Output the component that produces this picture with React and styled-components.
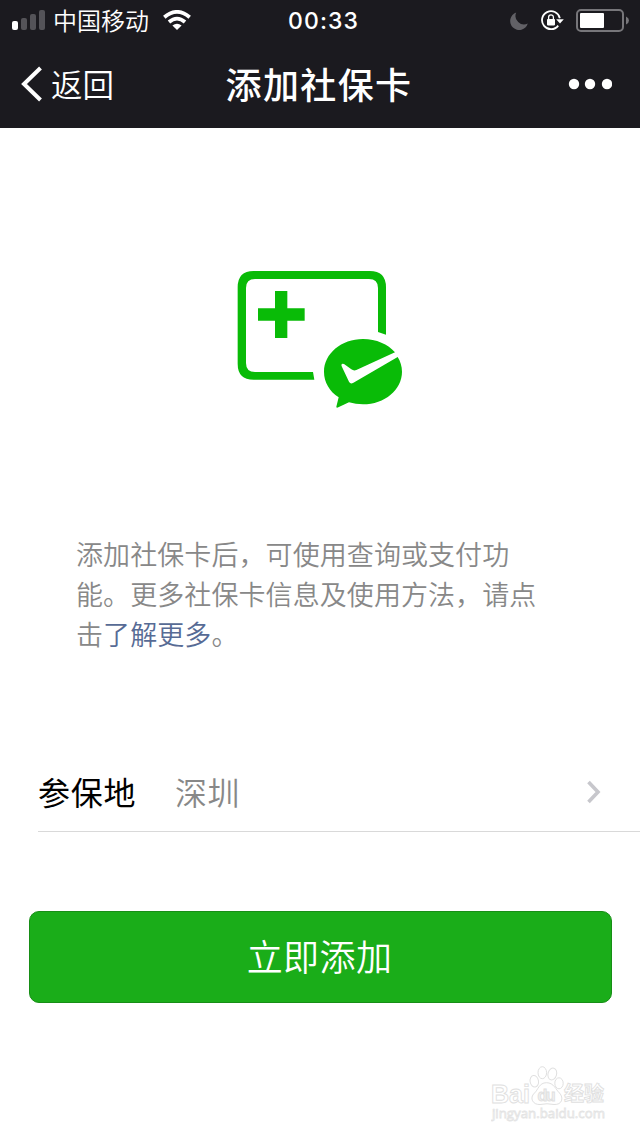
import React from 'react';
import styled, { createGlobalStyle } from 'styled-components';

const GlobalStyle = createGlobalStyle`
  * {
    box-sizing: border-box;
  }
  body {
    margin: 0;
    background: #fff;
    font-family: "Noto Sans CJK SC", sans-serif;
  }
  svg {
    display: block;
    flex: none;
  }
`;

const bars = [9, 12, 16, 20];

function StatusIcons() {
  return (
    <StatusRight>
      <svg width="18" height="18" viewBox="0 0 18 18">
        <path d="M6.2 .5 A9 9 0 1 0 17.8 11.6 A8.6 8.6 0 0 1 6.2 .5Z" fill="#626166" />
      </svg>
      <svg width="23" height="21" viewBox="0 0 23 21">
        <path d="M18.8 8.2 A9 9 0 1 0 17.2 15.6" fill="none" stroke="#fff" strokeWidth="1.8" />
        <path d="M15.2 9.2H22.8L19 13.4Z" fill="#fff" />
        <rect x="6" y="9" width="8" height="6.4" rx="0.8" fill="#fff" />
        <path d="M7.6 9.5V7.2a2.4 2.4 0 0 1 4.8 0V9.5" fill="none" stroke="#fff" strokeWidth="1.3" />
      </svg>
      <svg width="54" height="24" viewBox="0 0 54 24">
        <rect x="1" y="1" width="46" height="21" rx="4" fill="none" stroke="#77767a" strokeWidth="2" />
        <rect x="4" y="4" width="24" height="15" rx="1" fill="#fff" />
        <path d="M50 7.5 Q53 9 53 11.5 Q53 14 50 15.5Z" fill="#77767a" />
      </svg>
    </StatusRight>
  );
}

function CardIcon() {
  return (
    <svg width="190" height="160" viewBox="0 0 570 480" fill="#09bb07">
      <path d="M268 359H86Q38 359 38 311V82Q38 33 86 33H434Q483 33 483 82V224L459 216V84Q459 57 432 57H90Q63 57 63 84V309Q63 336 90 336H264Z" />
      <path d="M150 93H187V145H239V182H187V234H150V182H99V145H150Z" />
      <path d="M414 237C349 237 297 281 297 335C297 367 314 394 341 412L334 440Q334 445 340 442L372 427Q392 433 414 433C479 433 531 389 531 335C531 319 526 304 518 291L384 369Q376 373 372 365L350 319Q347 309 357 312L379 328Q386 333 394 330L510 277C489 253 454 237 414 237Z" />
    </svg>
  );
}

function Watermark() {
  return (
    <Mark>
      <svg width="120" height="60" viewBox="0 0 120 60">
        <g fill="#fff" stroke="#e0e0e0" strokeWidth="1">
          <ellipse cx="43.3" cy="17.3" rx="4.2" ry="5.8" transform="rotate(-10 43.3 17.3)" />
          <ellipse cx="51.3" cy="8.7" rx="4.3" ry="6" />
          <ellipse cx="61.3" cy="10" rx="4.3" ry="6" transform="rotate(15 61.3 10)" />
          <ellipse cx="68" cy="19.3" rx="4.2" ry="5.5" />
          <path d="M55.5 18.7C48 18.7 47 26 43.5 29C38 34 42 41 49 40.5Q56 39 63 40.5C71 41 73 34 68.5 29C65 26 63 18.7 55.5 18.7Z" />
        </g>
        <g fontFamily="Liberation Sans" fontWeight="bold" fill="#fff" stroke="#e0e0e0" strokeWidth="0.9">
          <text x="0" y="38.5" fontSize="26" textLength="39" lengthAdjust="spacingAndGlyphs">Bai</text>
          <text x="46.5" y="36.5" fontSize="16" fill="#f2f2f2" textLength="18">du</text>
          <text x="73" y="37" fontSize="20" fontFamily="Noto Sans CJK SC">经验</text>
        </g>
        <text x="1" y="54" fontSize="13" fontFamily="Open Sans" fontWeight="500" fill="#fff" stroke="#e4e4e4" strokeWidth="0.8" textLength="113" lengthAdjust="spacingAndGlyphs">jingyan.baidu.com</text>
      </svg>
    </Mark>
  );
}

function App() {
  return (
    <Page>
      <GlobalStyle />
      <Header>
        <StatusBar>
          <StatusLeft>
            <Signal>
              {bars.map((height, index) => (
                <Bar key={height} $height={height} $active={index === 0} />
              ))}
            </Signal>
            <Carrier>中国移动</Carrier>
            <svg width="28" height="20" viewBox="0 0 28 20">
              <g fill="none" stroke="#fff" strokeWidth="3.8">
                <path d="M1.3 7.2 Q14 -3.4 26.7 7.2" />
                <path d="M6 12 Q14 5.2 22 12" />
              </g>
              <path d="M9.4 15.6 Q14 11.8 18.6 15.6L14 20Z" fill="#fff" />
            </svg>
          </StatusLeft>
          <Time>00:33</Time>
          <StatusIcons />
        </StatusBar>
        <NavBar>
          <Back>
            <svg width="22" height="36" viewBox="0 0 22 36">
              <path d="M19.5 2 L3 18 L19.5 34" fill="none" stroke="#fff" strokeWidth="4" />
            </svg>
            <BackText>返回</BackText>
          </Back>
          <Title>添加社保卡</Title>
          <More>
            <svg width="44" height="12" viewBox="0 0 44 12" fill="#fff">
              <circle cx="6" cy="6" r="5.2" />
              <circle cx="22" cy="6" r="5.2" />
              <circle cx="39" cy="6" r="5.2" />
            </svg>
          </More>
        </NavBar>
      </Header>
      <Hero>
        <CardIcon />
      </Hero>
      <Description>
        添加社保卡后，可使用查询或支付功
        <br />
        能。更多社保卡信息及使用方法，请点
        <br />
        击<Link>了解更多</Link>。
      </Description>
      <Field>
        <Label>参保地</Label>
        <Value>深圳</Value>
        <svg width="14" height="24" viewBox="0 0 14 24">
          <path d="M1.5 2 L11 12 L1.5 22" fill="none" stroke="#c7c7cc" strokeWidth="3.6" />
        </svg>
      </Field>
      <Submit>立即添加</Submit>
      <Watermark />
    </Page>
  );
}

const Page = styled.div`
  display: flex;
  flex-direction: column;
  width: 640px;
  height: 1136px;
  background: #fff;
  overflow: hidden;
`;

const Header = styled.header`
  height: 128px;
  background: #1b1a1f;
  color: #fff;
`;

const StatusBar = styled.div`
  display: grid;
  grid-template-columns: 1fr auto 1fr;
  align-items: center;
  height: 40px;
  padding: 0 10px 0 12px;
`;

const StatusLeft = styled.div`
  display: flex;
  align-items: center;
  padding-bottom: 2px;
`;

const Signal = styled.div`
  display: flex;
  align-items: flex-end;
  gap: 3px;
  height: 20px;
`;

const Bar = styled.span`
  width: 6px;
  height: ${({ $height }) => $height}px;
  border-radius: 2px;
  background: ${({ $active }) => ($active ? '#fff' : '#545358')};
`;

const Carrier = styled.span`
  margin: 0 14px 0 8px;
  font-size: 24px;
  font-weight: 350;
  line-height: 40px;
`;

const Time = styled.span`
  padding-left: 5px;
  font-family: Inter, sans-serif;
  font-size: 23px;
  font-weight: 500;
  letter-spacing: 1.1px;
  line-height: 42px;
`;

const StatusRight = styled.div`
  display: flex;
  align-items: center;
  justify-content: flex-end;
  gap: 13px;
  padding-bottom: 1px;

  svg:last-child {
    margin-left: -1px;
  }
`;

const NavBar = styled.nav`
  display: grid;
  grid-template-columns: 1fr auto 1fr;
  align-items: center;
  height: 88px;
  padding: 0 28px 0 21px;
`;

const Back = styled.div`
  display: flex;
  align-items: center;
  gap: 8px;
`;

const BackText = styled.span`
  padding-bottom: 2px;
  font-size: 31.5px;
  font-weight: 350;
  line-height: 48px;
`;

const Title = styled.h1`
  margin: 0;
  padding: 0 0 3px 5px;
  font-size: 36px;
  font-weight: 500;
  letter-spacing: 1.4px;
  line-height: 54px;
`;

const More = styled.div`
  display: flex;
  justify-content: flex-end;
`;

const Hero = styled.div`
  display: flex;
  padding: 132px 0 0 225px;
`;

const Description = styled.p`
  margin: 114px 76px 0;
  color: #888;
  font-size: 27px;
  font-weight: 350;
  letter-spacing: 0.08px;
  line-height: 40px;
  white-space: nowrap;
`;

const Link = styled.a`
  color: #576b95;
`;

const Field = styled.div`
  display: flex;
  align-items: center;
  height: 80px;
  margin: 98px 0 0 38px;
  padding-right: 39px;
  border-bottom: 1px solid #d9d9d9;
  font-size: 32px;
  line-height: 48px;
`;

const Label = styled.span`
  width: 137px;
  padding-bottom: 2px;
  font-weight: 400;
  letter-spacing: 0.7px;
  color: #000;
`;

const Value = styled.span`
  flex: 1;
  padding-bottom: 2px;
  font-weight: 350;
  letter-spacing: 0.5px;
  color: #888;
`;

const Submit = styled.button`
  flex: none;
  height: 92px;
  margin: 79px 28px 0 29px;
  padding: 0 2px 4px 0;
  border: 1px solid #178e16;
  border-radius: 10px;
  background: #1aad19;
  color: #fff;
  font-family: inherit;
  font-size: 36px;
  font-weight: 350;
  letter-spacing: 0.4px;
`;

const Mark = styled.div`
  display: flex;
  justify-content: flex-end;
  padding: 61px 29px 0 0;
`;

export default App;
